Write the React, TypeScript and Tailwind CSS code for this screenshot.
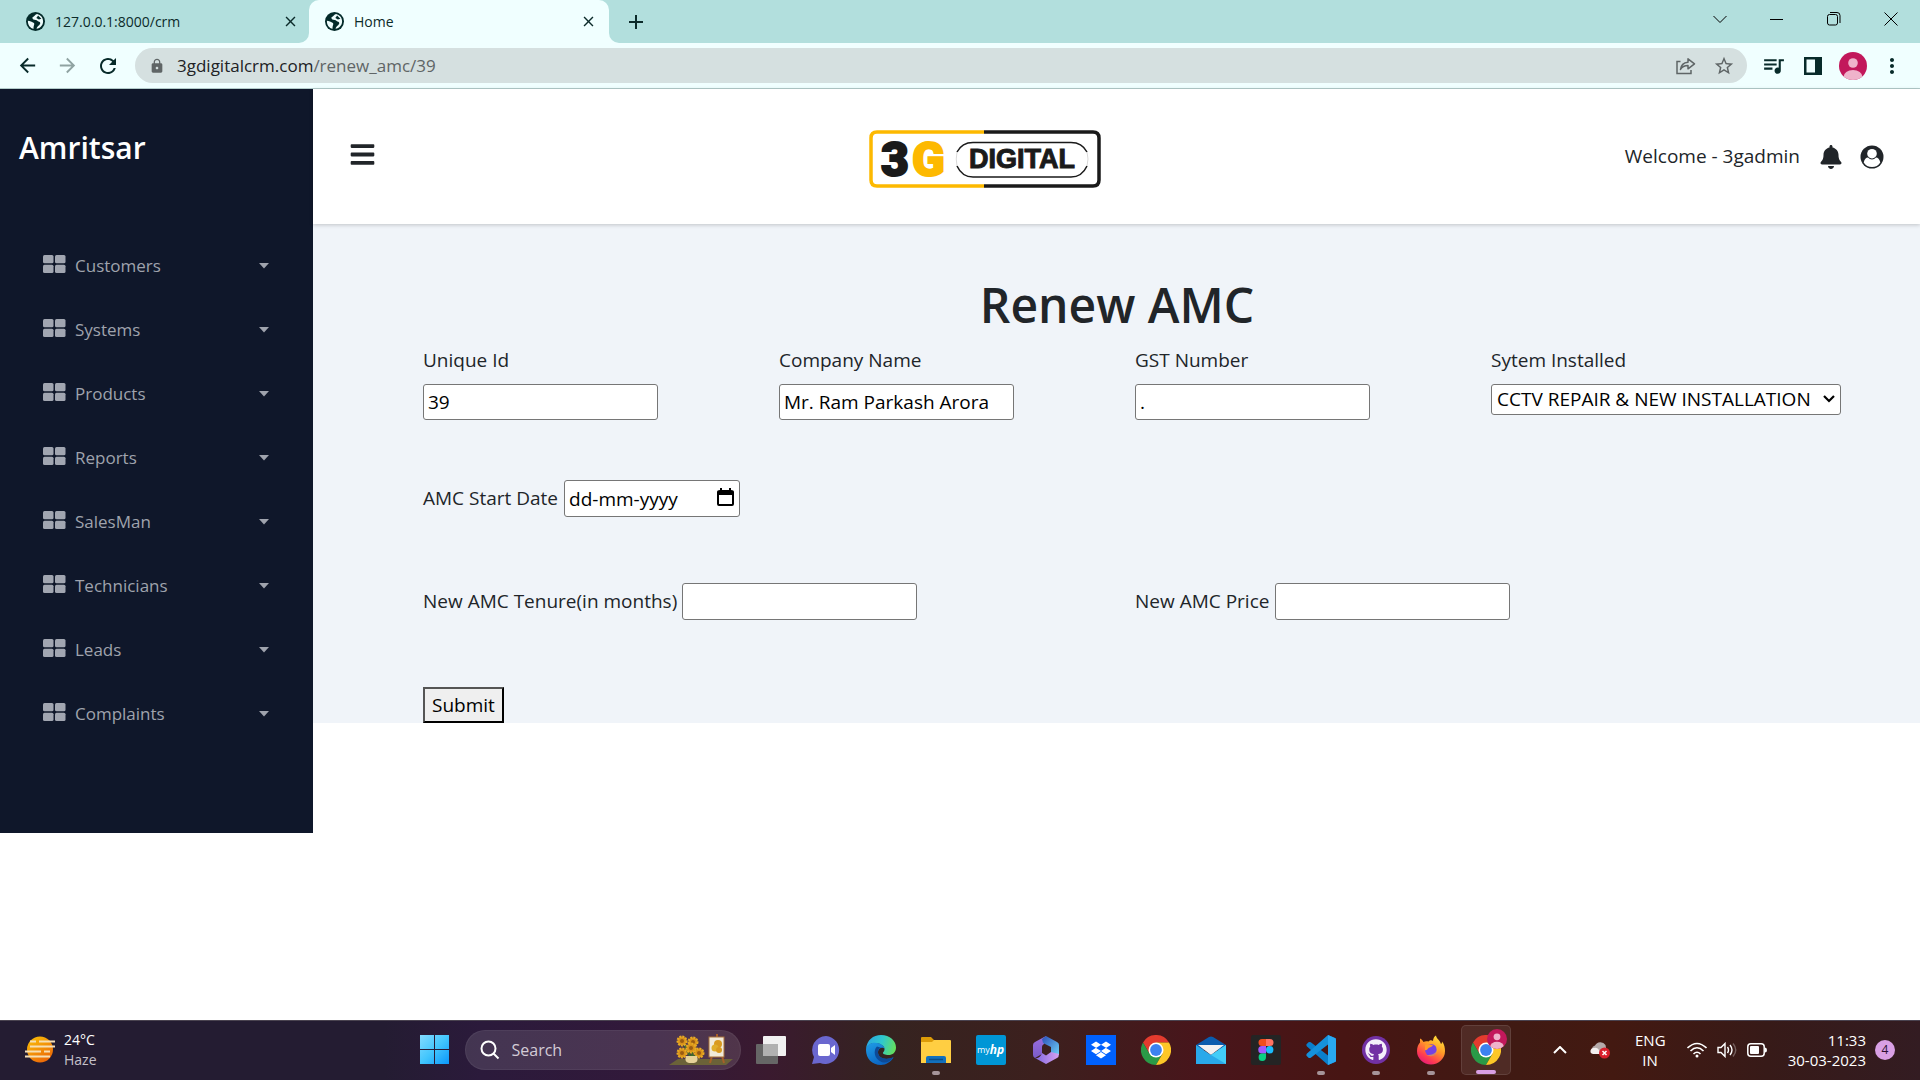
import React from "react";
import {
  MdArrowBack,
  MdArrowForward,
  MdRefresh,
  MdLock,
  MdStarBorder,
  MdQueueMusic,
  MdMoreVert,
  MdClose,
  MdAdd,
} from "react-icons/md";
import { FaBell, FaBars, FaGithub, FaDropbox } from "react-icons/fa";

const menu = ["Customers", "Systems", "Products", "Reports", "SalesMan", "Technicians", "Leads", "Complaints"];

function Globe() {
  return (
    <svg width="19" height="19" viewBox="0 0 18 18" className="ml-px">
      <circle cx="9" cy="9" r="9" fill="#032a29" />
      <path d="M10.500 2C8.500 2.500 8.500 4 7 4.500 5.500 5 6 6.500 7 7c1.500.5 3 0 4 1.500 1 1 2.500.5 2.500 2C13.500 12.500 11 13 10 15.800 13.500 15.500 16.200 12.500 16.200 9 16.200 5.500 13.800 2.700 10.500 2z" fill="#eefcfc" />
      <path d="M11.500 3.200 14.600 6.300 12.200 7.200 9.800 5.800z" fill="#032a29" />
      <path d="M1.800 8.200C3.500 8.500 6 9 7.500 10.500 8.500 12 7 12.500 7.200 15.900 4 15.200 1.600 12.300 1.800 8.200z" fill="#eefcfc" />
    </svg>
  );
}

function TabBar() {
  return (
    <div className="flex h-[43px] items-stretch bg-[#b2dfdd] text-[#0c2b2a]">
      <button className="flex w-[309px] items-center pl-[25px] pr-[10px] text-left text-[14px]">
        <Globe />
        <span className="ml-[10px] flex-1">127.0.0.1:8000/crm</span>
        <MdClose size={17} />
      </button>
      <div className="relative flex w-[300px] items-center rounded-t-[10px] bg-[#f0ffff] pl-[15px] pr-[12px] text-[14px]">
        <span className="absolute bottom-0 -left-[10px] size-[10px] bg-[#f0ffff]">
          <span className="block size-[10px] rounded-br-[10px] bg-[#b2dfdd]" />
        </span>
        <span className="absolute bottom-0 -right-[10px] size-[10px] bg-[#f0ffff]">
          <span className="block size-[10px] rounded-bl-[10px] bg-[#b2dfdd]" />
        </span>
        <Globe />
        <span className="ml-[10px] flex-1">Home</span>
        <button aria-label="Close tab">
          <MdClose size={17} />
        </button>
      </div>
      <button aria-label="New tab" className="ml-[15px]">
        <MdAdd size={24} />
      </button>
      <div className="ml-auto flex h-[37px] items-center pr-px text-black">
        <button aria-label="Search tabs" className="flex w-[57px] justify-center">
          <svg width="14" height="14" viewBox="0 0 14 14" fill="none" stroke="currentColor">
            <path d="M.5 4 7 10.500 13.500 4" />
          </svg>
        </button>
        <button aria-label="Minimize" className="flex w-[57px] justify-center">
          <svg width="14" height="14" viewBox="0 0 14 14" stroke="currentColor">
            <path d="M0 7.500H13" />
          </svg>
        </button>
        <button aria-label="Restore" className="flex w-[57px] justify-center">
          <svg width="14" height="14" viewBox="0 0 14 14" fill="none" stroke="currentColor">
            <rect x=".5" y="2.500" width="10" height="10.500" rx="2" />
            <path d="M3 .5h7q3 0 3 3V11" />
          </svg>
        </button>
        <button aria-label="Close" className="flex w-[57px] justify-center">
          <svg width="14" height="14" viewBox="0 0 14 14" stroke="currentColor">
            <path d="M.5.5 13.500 13.500M13.500.5.5 13.500" />
          </svg>
        </button>
      </div>
    </div>
  );
}

function Toolbar() {
  return (
    <div className="flex h-[46px] items-center border-b border-[#b3cccb] bg-[#f0ffff] pl-[16px] pr-[16px] text-[#082b2a]">
      <button aria-label="Back" className="w-[40px]"><MdArrowBack size={23} /></button>
      <button aria-label="Forward" className="w-[40px] text-[#8fa3a2]"><MdArrowForward size={23} /></button>
      <button aria-label="Reload" className="w-[39px]"><MdRefresh size={24} /></button>
      <div className="flex h-[35px] flex-1 items-center rounded-full bg-[#d5e0e0] pl-[14px] pr-[12px] text-[17px] text-[#5f6566]">
        <MdLock size={16} />
        <p className="ml-[12px] flex-1">
          <span className="text-[#202124]">3gdigitalcrm.com</span>/renew_amc/39
        </p>
        <button aria-label="Share" className="mr-[17px]">
          <svg width="20" height="18" viewBox="0 0 20 18" fill="none" stroke="currentColor" strokeWidth="1.500">
            <path d="M4.500 4.500H1v12h14V13" />
            <path d="M4.500 12.500C5 8 8 5.500 12 5.200V1.800L18.500 6.800 12 11.800V8.500c-3.500 0-6 1.300-7.500 4z" strokeLinejoin="round" />
          </svg>
        </button>
        <button aria-label="Bookmark"><MdStarBorder size={22} /></button>
      </div>
      <button aria-label="Media" className="ml-[14px]"><MdQueueMusic size={25} /></button>
      <button aria-label="Side panel" className="ml-[18px]">
        <svg width="18" height="18" viewBox="0 0 18 18">
          <path fill="currentColor" fillRule="evenodd" d="M0 0h18v18H0zM2.500 2.500v13h8.500v-13z" />
        </svg>
      </button>
      <button aria-label="Profile" className="ml-[17px]"><Avatar size={28} /></button>
      <button aria-label="More" className="ml-[13px]"><MdMoreVert size={24} /></button>
    </div>
  );
}

function Avatar({ size }: { size: number }) {
  return (
    <svg width={size} height={size} viewBox="0 0 28 28">
      <defs>
        <clipPath id="avatar-clip"><circle cx="14" cy="14" r="14" /></clipPath>
      </defs>
      <g clipPath="url(#avatar-clip)">
        <rect width="28" height="28" fill="#c2185b" />
        <circle cx="14" cy="11" r="4.800" fill="#efb3cb" />
        <ellipse cx="14" cy="25" rx="9.500" ry="7" fill="#efb3cb" />
      </g>
    </svg>
  );
}

function Sidebar() {
  return (
    <aside className="w-[313px] shrink-0 self-start bg-[#0f172a] pb-[87px] pt-[39px]">
      <h2 className="pl-[19px] text-[30px] leading-[40px] font-semibold text-white">Amritsar</h2>
      <nav className="pt-[66px]">
        <ul>
          {menu.map((name) => (
            <li key={name}>
              <button className="flex h-[64px] w-full items-center pl-[43px] pr-[44px] text-[17px] text-[#9fa3ad]">
                <svg width="23" height="18" viewBox="0 0 23 18" fill="#a1a6b1" className="mb-[5px]">
                  <rect width="10.500" height="8.300" rx="1.500" />
                  <rect x="12" width="10.500" height="8.300" rx="1.500" />
                  <rect y="9.700" width="10.500" height="8.300" rx="1.500" />
                  <rect x="12" y="9.700" width="10.500" height="8.300" rx="1.500" />
                </svg>
                <span className="ml-[9px] flex-1 text-left">{name}</span>
                <svg width="10" height="6" viewBox="0 0 10 6" fill="currentColor">
                  <path d="M0 0h10L5 5.500z" />
                </svg>
              </button>
            </li>
          ))}
        </ul>
      </nav>
    </aside>
  );
}

function Logo() {
  return (
    <svg width="234" height="60" viewBox="0 0 234 60" role="img" aria-label="3G Digital">
      <path d="M116 3H9Q3 3 3 9V51Q3 57 9 57H116" fill="none" stroke="#fdb900" strokeWidth="3.500" />
      <path d="M116 3H225Q231 3 231 9V51Q231 57 225 57H116" fill="none" stroke="#1a1a1a" strokeWidth="3.500" />
      <text x="13" y="46.500" fontFamily="Roboto" fontWeight="900" fontSize="48" fill="#1a1a1a" stroke="#1a1a1a" strokeWidth="2">3</text>
      <text x="44" y="46.500" fontFamily="Roboto" fontWeight="900" fontSize="48" fill="#fdb900" stroke="#fdb900" strokeWidth="2">G</text>
      <path d="M89 23Q94 13.500 105 13.500H203Q214 13.500 219 23M89 37Q94 48 105 48H203Q214 48 219 37" fill="none" stroke="#1a1a1a" strokeWidth="1.500" />
      <path d="M89 23Q87.500 30 89 37M219 23Q221 30 219 37" fill="none" stroke="#c8c8c8" strokeWidth=".7" />
      <text x="101" y="39" fontFamily="Liberation Sans" fontWeight="700" fontSize="27" fill="#1a1a1a" stroke="#1a1a1a" strokeWidth="1">DIGITAL</text>
    </svg>
  );
}

function Header() {
  return (
    <header className="relative grid h-[135px] grid-cols-[1fr_auto_1fr] items-center bg-white pl-[36px] pr-[36px] shadow-[0_1px_4px_rgba(0,0,0,0.2)]">
      <button aria-label="Toggle menu" className="mb-[4px] justify-self-start"><FaBars size={27} /></button>
      <div className="mr-[263px] mt-[4px]"><Logo /></div>
      <div className="flex items-center justify-self-end text-[19px] whitespace-nowrap">
        <span>Welcome - 3gadmin</span>
        <button aria-label="Notifications" className="ml-[19px]"><FaBell size={24} /></button>
        <button aria-label="Account" className="ml-[17px]">
          <svg width="24" height="24" viewBox="0 0 24 24">
            <circle cx="12" cy="12" r="11.500" fill="#212529" />
            <path d="M3.700 17.500C4.500 14 6 12.700 8 12.500Q9.700 14.500 12 14.500T16 12.500C18 12.700 19.500 14 20.300 17.500Q17.500 22 12 22T3.700 17.500z" fill="#fff" />
            <circle cx="12" cy="8.700" r="4.800" fill="#fff" />
          </svg>
        </button>
      </div>
    </header>
  );
}

const inputBox = "rounded-[3px] border border-[#767676] bg-white px-[4px] text-black";

function FormPage() {
  return (
    <main className="bg-[#f0f4f9] pl-[74px] pr-[73px] pt-[51px]">
      <h1 className="text-center text-[48px] leading-[60px] font-semibold">Renew AMC</h1>
      <form className="pl-[36px]" onSubmit={(e) => e.preventDefault()}>
        <div className="grid grid-cols-4 pt-[11px]">
          <div>
            <label htmlFor="uid" className="block h-[38px] leading-[28px]">Unique Id</label>
            <input id="uid" defaultValue="39" className={`${inputBox} block h-[36px] w-[235px]`} />
          </div>
          <div>
            <label htmlFor="company" className="block h-[38px] leading-[28px]">Company Name</label>
            <input id="company" defaultValue="Mr. Ram Parkash Arora" className={`${inputBox} block h-[36px] w-[235px]`} />
          </div>
          <div>
            <label htmlFor="gst" className="block h-[38px] leading-[28px]">GST Number</label>
            <input id="gst" defaultValue="." className={`${inputBox} block h-[36px] w-[235px]`} />
          </div>
          <div>
            <label htmlFor="system" className="block h-[38px] leading-[28px]">Sytem Installed</label>
            <div className="relative w-[350px]">
              <select id="system" className={`${inputBox} block h-[31px] w-full appearance-none pl-[5px]`}>
                <option>CCTV REPAIR &amp; NEW INSTALLATION</option>
              </select>
              <svg width="12" height="8" viewBox="0 0 12 8" fill="none" stroke="#000" strokeWidth="2.200" className="pointer-events-none absolute right-[6px] top-[11px]">
                <path d="M1 1 6 6 11 1" />
              </svg>
            </div>
          </div>
        </div>

        <div className="flex items-center gap-[6px] pt-[60px]">
          <label htmlFor="start">AMC Start Date</label>
          <div className="relative">
            <input id="start" placeholder="dd-mm-yyyy" className={`${inputBox} block h-[37px] w-[176px] placeholder:text-black placeholder:opacity-100`} />
            <button type="button" aria-label="Pick date" className="absolute right-[6px] top-[8px]">
              <svg width="17" height="19" viewBox="0 0 17 19">
                <path fillRule="evenodd" d="M3 0h2v2h7V0h2v2q3 0 3 2v12q0 2-2 2H2q-2 0-2-2V4q0-2 3-2zM2 7v9h13V7z" />
              </svg>
            </button>
          </div>
        </div>

        <div className="grid grid-cols-2 pt-[66px]">
          <div className="flex items-center gap-[5px]">
            <label htmlFor="tenure">New AMC Tenure(in months)</label>
            <input id="tenure" className={`${inputBox} h-[37px] w-[235px]`} />
          </div>
          <div className="flex items-center gap-[6px]">
            <label htmlFor="price">New AMC Price</label>
            <input id="price" className={`${inputBox} h-[37px] w-[235px]`} />
          </div>
        </div>

        <div className="pt-[67px]">
          <button className="block h-[36px] border-2 border-t-[#555] border-l-[#555] border-r-black border-b-black bg-[#efefef] px-[7px] text-black">
            Submit
          </button>
        </div>
      </form>
    </main>
  );
}

function ChromeIcon() {
  return (
    <svg width="30" height="30" viewBox="0 0 30 30">
      <path d="M2 7.500A15 15 0 0 1 28 7.500H15L8.500 18.700z" fill="#e33b2e" />
      <path d="M2 7.500A15 15 0 0 0 15 30L21.500 18.700 8.500 18.700z" fill="#2a9a47" />
      <path d="M28 7.500A15 15 0 0 1 15 30L21.500 18.700 15 7.500z" fill="#fdc727" />
      <circle cx="15" cy="15" r="7.500" fill="#fff" />
      <circle cx="15" cy="15" r="5.900" fill="#3c82f0" />
    </svg>
  );
}

function EdgeIcon() {
  return (
    <svg width="30" height="30" viewBox="0 0 30 30">
      <defs>
        <linearGradient id="edge-top" x1="0" y1=".4" x2="1" y2=".6">
          <stop offset="0" stopColor="#2aa8e0" />
          <stop offset=".5" stopColor="#2fc8cd" />
          <stop offset="1" stopColor="#66e05a" />
        </linearGradient>
        <linearGradient id="edge-body" x1="0" y1="0" x2=".6" y2="1">
          <stop offset="0" stopColor="#1f9de6" />
          <stop offset="1" stopColor="#0a62c0" />
        </linearGradient>
      </defs>
      <path d="M0 14C1 5 7 0 15 0c9 0 15 6 15 12.500 0 5-3.500 7.500-7.500 7.500-3.500 0-6-1-5.500-2.500 1-1 1.500-2 1.500-3.500C18.500 11 14 8 9 8 4 8 1 11 0 14z" fill="url(#edge-top)" />
      <path d="M0 15C0 10.500 4 7.800 9 7.800c5 0 9.500 3 9.500 6-1-2-6.500-1.500-6.500 3.500 0 6 7 8.500 15.500 5C25 27 20 30 15 30 6 30 0 23.500 0 15z" fill="url(#edge-body)" />
      <path d="M11 11.500C7 15 8 24 15.500 27c4 1.500 8.500 0 12-4.700-7 3-15.500 1-15.500-5 0-2.800 1.500-4.300 3-4.600z" fill="#0d4a97" />
    </svg>
  );
}

function VsCodeIcon() {
  return (
    <svg width="30" height="30" viewBox="0 0 30 30">
      <path d="M22 0 30 3.500V26.500L22 30 1 11.500Q-.3 10 1 8.800L2.500 7.300Q3.500 6.500 4.800 7.300L22 20.500z" fill="#0a7fcc" />
      <path d="M22 0 1 18.500Q-.3 20 1 21.200L2.500 22.700Q3.500 23.500 4.800 22.700L22 9.500z" fill="#1591dc" />
      <path d="M22 0 29 3Q30 3.500 30 4.500V25.500Q30 26.500 29 27L22 30Z" fill="#29a9f2" />
    </svg>
  );
}

function FirefoxIcon() {
  return (
    <svg width="30" height="30" viewBox="0 0 30 30">
      <defs>
        <linearGradient id="fox" x1=".8" y1="0" x2=".2" y2="1">
          <stop offset="0" stopColor="#ffe83b" />
          <stop offset=".4" stopColor="#ff9a27" />
          <stop offset=".75" stopColor="#ff3b52" />
          <stop offset="1" stopColor="#e0157f" />
        </linearGradient>
      </defs>
      <path d="M1 16C1 12 2.500 9 4 7.500V3.500C6 4.500 7 6 7.500 7 9 6 11 6 12.500 6.500 14 4.500 16 5 17 6 17 3.500 18.500 1 20 .5 20.500 4 24 5 25 9 26 8.500 26 7 26 6.500 28.500 9.500 29 13 29 16A14 13.500 0 0 1 1 16z" fill="url(#fox)" />
      <circle cx="15" cy="15" r="6" fill="#7542e4" />
      <path d="M9 10C12 8.500 14 10 17 10c-1 2-3 2-4.500 3-1 1-2 3-3.500 2z" fill="#ff9a27" />
      <path d="M18 8c5 2 5 8 2 11-3 3-7 2.500-9 1 4 0 9-1 9.500-5 0-3-1-5-2.500-7z" fill="#ffb02e" opacity=".6" />
    </svg>
  );
}

function M365Icon() {
  return (
    <svg width="28" height="30" viewBox="0 0 28 30">
      <defs>
        <linearGradient id="m-a" x1="0" y1="0" x2="0" y2="1"><stop offset="0" stopColor="#9b6fe0" /><stop offset="1" stopColor="#7a5cc8" /></linearGradient>
        <linearGradient id="m-b" x1="0" y1="0" x2="1" y2="1"><stop offset="0" stopColor="#2b4fb8" /><stop offset="1" stopColor="#6fd0f8" /></linearGradient>
        <linearGradient id="m-c" x1="0" y1="0" x2="1" y2="0"><stop offset="0" stopColor="#8068e0" /><stop offset="1" stopColor="#d6a0f0" /></linearGradient>
      </defs>
      <path d="M14 1 3 7Q1 8 1 10V20Q1 22 3 23L10 19V12Q10 10 12 9z" fill="url(#m-a)" />
      <path d="M14 1 25 7Q27 8 27 10V20L19 18V12L11 8 10 4z" fill="url(#m-b)" />
      <path d="M3 23 14 29 25 23Q27 22 27 19L19 17 14 20.500 10 18Q8 24 3 23z" fill="url(#m-c)" />
    </svg>
  );
}

function Sunflowers() {
  const blooms = [[13, 7], [24, 8], [13, 19], [30, 19], [22, 14]];
  return (
    <svg width="66" height="32" viewBox="0 0 66 32">
      <path d="M0 31 9 25H64L57 31z" fill="#6b6238" />
      <path d="M14 8 22 24 30 18M23 8V22" stroke="#3f6a2c" strokeWidth="2" fill="none" />
      {blooms.map(([x, y]) => (
        <g key={`${x}-${y}`}>
          <circle cx={x} cy={y} r="4.500" fill="#d9921a" stroke="#e8ab24" strokeWidth="2" strokeDasharray="2 1" />
          <circle cx={x} cy={y} r="2" fill="#9a5c12" />
        </g>
      ))}
      <path d="M17 22h11q2 6-3 7h-5q-5-1-3-7z" fill="#e6d29a" />
      <path d="M43 22 41 29M53 22l2 7M48 0v4" stroke="#a85f27" strokeWidth="2" />
      <rect x="40" y="3" width="15" height="20" fill="#f1ead9" stroke="#a8703a" />
      <circle cx="49" cy="10" r="4" fill="#d99a20" />
      <circle cx="46" cy="14" r="3.500" fill="#e0ae2c" />
      <circle cx="50" cy="16" r="3" fill="#d99a20" />
    </svg>
  );
}

type App = { name: string; icon: React.ReactNode; running?: boolean };

const apps: App[] = [
  {
    name: "Task view",
    icon: (
      <svg width="30" height="28" viewBox="0 0 30 28">
        <rect y="8" width="22" height="20" rx="1" fill="#666" />
        <rect x="7" width="23" height="20" rx="1" fill="#f1f1f1" />
        <rect x="7" y="8" width="15" height="12" fill="#b1b1b1" />
      </svg>
    ),
  },
  {
    name: "Chat",
    icon: (
      <svg width="30" height="30" viewBox="0 0 30 30">
        <path d="M15 1A14 14 0 1 1 9 28L1 29 3 22A14 14 0 0 1 15 1z" fill="#6a67cf" />
        <rect x="7" y="9" width="12" height="12" rx="2" fill="#fff" />
        <path d="M20 13 24 10V20L20 17z" fill="#fff" />
      </svg>
    ),
  },
  { name: "Edge", icon: <EdgeIcon /> },
  {
    name: "File Explorer",
    running: true,
    icon: (
      <svg width="30" height="28" viewBox="0 0 30 28">
        <path d="M0 2Q0 1 1 1H10L13 4H29V12H0z" fill="#dd9c08" />
        <path d="M0 6H11L13 4H29Q30 4 30 5V27H0z" fill="#ffce42" />
        <path d="M5 27V22Q5 20 7 20H23Q25 20 25 22V27z" fill="#1270bd" />
        <path d="M8 23.500H22" stroke="#0a4c87" strokeWidth="1.500" />
      </svg>
    ),
  },
  {
    name: "myHP",
    icon: (
      <span className="flex size-[30px] items-center justify-center rounded-[2px] bg-[#0096d6] text-[9px] text-white">
        my<b className="text-[12px] italic">hp</b>
      </span>
    ),
  },
  { name: "Microsoft 365", icon: <M365Icon /> },
  {
    name: "Dropbox",
    icon: (
      <span className="flex size-[30px] items-center justify-center bg-[#0061fe] text-white">
        <FaDropbox size={20} />
      </span>
    ),
  },
  { name: "Chrome", icon: <ChromeIcon /> },
  {
    name: "Mail",
    icon: (
      <svg width="30" height="28" viewBox="0 0 30 28">
        <path d="M0 9 13 1Q15 0 17 1L30 9V14H0z" fill="#0a5cae" />
        <path d="M2 9H28L15 19z" fill="#f1f1f1" />
        <path d="M0 9V28H30V9L15 19z" fill="#29a9ea" />
        <path d="M30 9V28L15 19z" fill="#42cdf8" />
      </svg>
    ),
  },
  {
    name: "Figma",
    icon: (
      <svg width="30" height="30" viewBox="0 0 30 30">
        <rect width="30" height="30" rx="2" fill="#242424" />
        <path d="M15 4h-4a3.500 3.500 0 0 0 0 7h4z" fill="#f24e1e" />
        <path d="M15 4h4a3.500 3.500 0 0 1 0 7h-4z" fill="#ff7262" />
        <path d="M15 11h-4a3.500 3.500 0 0 0 0 7.500h4z" fill="#a259ff" />
        <circle cx="18.700" cy="14.700" r="3.700" fill="#1abcfe" />
        <path d="M15 18.500h-4a3.700 3.700 0 1 0 4 3.700z" fill="#0acf83" />
      </svg>
    ),
  },
  { name: "Visual Studio Code", icon: <VsCodeIcon />, running: true },
  {
    name: "GitHub Desktop",
    running: true,
    icon: (
      <span className="flex size-[28px] items-center justify-center rounded-full bg-[#7231a4] text-[#f4effa]">
        <FaGithub size={22} />
      </span>
    ),
  },
  { name: "Firefox", icon: <FirefoxIcon />, running: true },
];

function Taskbar() {
  return (
    <footer className="mt-auto grid h-[60px] grid-cols-[1fr_auto_1fr] items-center border-t border-[#4a4350] bg-[linear-gradient(90deg,#241c32_0%,#241c32_20%,#2b1a3b_25%,#32193a_34%,#3a1a2f_40%,#352320_46%,#3c201e_54%,#49151b_63%,#471513_70%,#401a13_79%,#431911_84%,#371a18_92%,#331c22_100%)] pb-[2px] text-[15px] text-white">
      <button className="flex items-center justify-self-start pl-[25px] text-left">
        <svg width="30" height="28" viewBox="0 0 30 28">
          <defs>
            <linearGradient id="sun" x1="0" y1="0" x2=".6" y2="1">
              <stop offset="0" stopColor="#fbc407" />
              <stop offset="1" stopColor="#ec6a08" />
            </linearGradient>
          </defs>
          <circle cx="15" cy="13.500" r="13" fill="url(#sun)" />
          <path d="M5 5.500h6M14 5.500h16M5 10.500h25M0 15.500h16M19 15.500h6M0 20.500h25" stroke="#f6dfb5" strokeWidth="2" />
        </svg>
        <span className="ml-[9px] text-[14px] leading-[20px]">
          24°C
          <span className="block text-[#c5c1c9]">Haze</span>
        </span>
      </button>

      <div className="flex items-center gap-[5px]">
        <button aria-label="Start" className="flex w-[50px] justify-center">
          <svg width="29" height="29" viewBox="0 0 29 29">
            <defs>
              <linearGradient id="win" gradientUnits="userSpaceOnUse" x1="0" y1="0" x2="29" y2="29">
                <stop offset="0" stopColor="#84dcff" />
                <stop offset=".5" stopColor="#43c6fd" />
                <stop offset="1" stopColor="#0b97fb" />
              </linearGradient>
            </defs>
            <path d="M0 0h14v14H0zM15 0h14v14H15zM0 15h14v14H0zM15 15h14v14H15z" fill="url(#win)" />
          </svg>
        </button>
        <label className="flex h-[40px] w-[276px] items-center rounded-full border border-white/5 bg-white/12 pl-[14px] pr-[5px]">
          <svg width="20" height="20" viewBox="0 0 20 20" fill="none" stroke="#fff" strokeWidth="2">
            <circle cx="8.500" cy="8.500" r="7" />
            <path d="M13.500 13.500 18.500 18.500" />
          </svg>
          <input aria-label="Search" placeholder="Search" className="ml-[12px] w-0 flex-1 text-[16px] placeholder:text-[#d3cbd6]" />
          <Sunflowers />
        </label>
        {apps.map((app) => (
          <button key={app.name} aria-label={app.name} className="relative flex h-[50px] w-[50px] items-center justify-center">
            {app.icon}
            {app.running && <span className="absolute bottom-0 h-[4px] w-[8px] rounded-full bg-[#a69499]" />}
          </button>
        ))}
        <button aria-label="Chrome window" className="relative flex h-[50px] w-[50px] items-center justify-center rounded-[5px] border border-white/10 bg-white/8">
          <ChromeIcon />
          <span className="absolute right-[3px] top-[3px]"><Avatar size={20} /></span>
          <span className="absolute bottom-0 h-[4px] w-[20px] rounded-full bg-[#d9a0e4]" />
        </button>
      </div>

      <div className="flex items-center justify-self-end pr-[25px] text-[15px]">
        <button aria-label="Hidden icons">
          <svg width="14" height="8" viewBox="0 0 14 8" fill="none" stroke="#fff" strokeWidth="2"><path d="M1 7 7 1 13 7" /></svg>
        </button>
        <button aria-label="OneDrive" className="ml-[23px]">
          <svg width="20" height="18" viewBox="0 0 20 18">
            <path d="M4 12a4 4 0 0 1 1-7.500A6 6 0 0 1 15.500 4L17 12z" fill="#b5aaaa" />
            <path d="M3 13a3 3 0 0 1 1-6q3-1 5 2l3 4z" fill="#f3f0f0" />
            <circle cx="14.500" cy="12" r="5.500" fill="#d8202c" />
            <path d="m12.500 10 4 4m0-4-4 4" stroke="#fff" strokeWidth="1.500" />
          </svg>
        </button>
        <button className="ml-[25px] w-[30px] text-center leading-[20px]">ENG IN</button>
        <button aria-label="Network, volume and battery" className="ml-[22px] flex items-center gap-[10px]">
          <svg width="20" height="16" viewBox="0 0 20 16" fill="none" stroke="#fff" strokeWidth="1.600">
            <path d="M.5 6Q10-3 19.500 6M3.500 9Q10 2.500 16.500 9M6.500 12Q10 8.500 13.500 12" />
            <circle cx="10" cy="14" r="1.500" fill="#fff" stroke="none" />
          </svg>
          <svg width="20" height="16" viewBox="0 0 20 16" fill="none" stroke="#fff" strokeWidth="1.400">
            <path d="M1 5.500h3l4-4v13l-4-4H1zM10.500 5Q12.500 8 10.500 11M13 3Q17 8 13 13" />
            <path d="M16 1.500Q21.500 8 16 14.500" opacity=".3" />
          </svg>
          <svg width="20" height="14" viewBox="0 0 20 14">
            <rect x=".8" y=".8" width="16.400" height="12.400" rx="3" fill="none" stroke="#fff" strokeWidth="1.500" />
            <rect x="3" y="3" width="9" height="8" rx="1" fill="#fff" />
            <path d="M18 4.500q2 0 2 2.500t-2 2.500z" fill="#fff" />
          </svg>
        </button>
        <button className="ml-[19px] w-[80px] text-right leading-[20px] whitespace-nowrap">
          11:33
          <span className="block">30-03-2023</span>
        </button>
        <span className="ml-[9px] flex size-[20px] items-center justify-center rounded-full bg-[#d9a0e4] text-[12px] text-[#2a1030]">4</span>
      </div>
    </footer>
  );
}

export default function App() {
  return (
    <div className="flex min-h-screen flex-col bg-white font-['Open_Sans','Noto_Sans',sans-serif] text-[19px] text-[#212529]">
      <TabBar />
      <Toolbar />
      <div className="flex">
        <Sidebar />
        <div className="min-w-0 flex-1">
          <Header />
          <FormPage />
        </div>
      </div>
      <Taskbar />
    </div>
  );
}
